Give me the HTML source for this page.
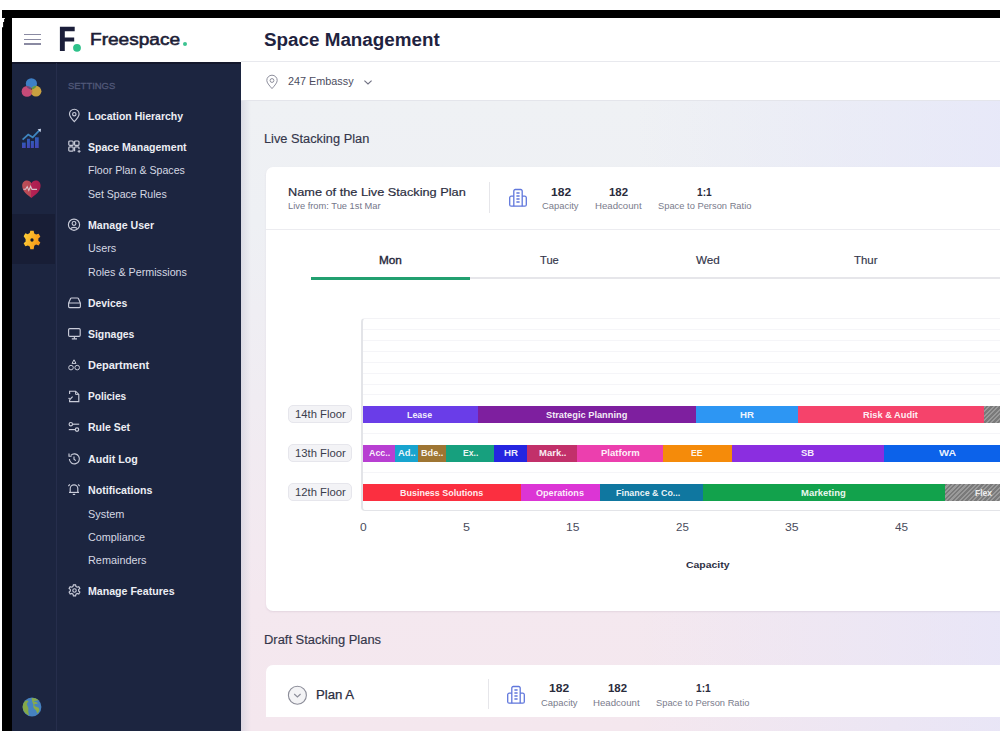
<!DOCTYPE html>
<html><head><meta charset="utf-8">
<style>
*{box-sizing:border-box;margin:0;padding:0}
html,body{width:1000px;height:731px;overflow:hidden;background:#fff;font-family:"Liberation Sans",sans-serif;position:relative}
.a{position:absolute}
.t{position:absolute;white-space:nowrap;transform-origin:0 50%;font-family:"Liberation Sans",sans-serif}
.seg{position:absolute}
</style></head><body>
<!-- black frame -->
<div class="a" style="left:2px;top:10px;width:998px;height:8px;background:#000"></div>
<div class="a" style="left:2px;top:10px;width:10px;height:721px;background:#000"></div>
<svg class="a" style="left:0;top:17.9px" width="6" height="10" viewBox="0 0 6 10"><path d="M0 0 H4.9 V1.1 H4.1 V4.1 H3.1 V9.2 H2 V0 Z" fill="#fff"/></svg>
<!-- header -->
<div class="a" style="left:12px;top:18px;width:988px;height:44px;background:#fff"></div>
<div class="a" style="left:241px;top:61px;width:759px;height:1px;background:#e8e9ee"></div>
<!-- hamburger -->
<div class="a" style="left:24px;top:34px;width:17px;height:1.4px;background:#8a8aa2"></div>
<div class="a" style="left:24px;top:38.6px;width:17px;height:1.4px;background:#8a8aa2"></div>
<div class="a" style="left:24px;top:43.2px;width:17px;height:1.4px;background:#8a8aa2"></div>
<!-- F logo -->
<svg class="a" style="left:50px;top:20px" width="40" height="40" viewBox="0 0 40 40">
<path d="M9.9 6.8 H24.7 V11.2 H14.8 V17.4 H24.2 V21.6 H14.8 V30.9 H9.9 Z" fill="#1b1e3a"/>
<circle cx="27" cy="27.8" r="3.9" fill="#2ec18a"/>
</svg>
<div class="a" style="left:182.8px;top:41.6px;width:4px;height:4px;border-radius:50%;background:#3cc391"></div>
<!-- sidebar -->
<div class="a" style="left:12px;top:62px;width:229px;height:669px;background:#1c2540"></div>
<div class="a" style="left:12px;top:62px;width:229px;height:1.5px;background:#14182c"></div>
<div class="a" style="left:55.5px;top:63px;width:1px;height:668px;background:#262e4c"></div>
<div class="a" style="left:12px;top:214px;width:43px;height:50px;background:#181e36"></div>
<!-- rail icons -->
<svg class="a" style="left:18px;top:74px" width="28" height="28" viewBox="0 0 28 28">
<defs><clipPath id="cb"><circle cx="13.4" cy="9.8" r="5.6"/></clipPath><clipPath id="cy"><circle cx="18" cy="17.2" r="5.4"/></clipPath></defs>
<circle cx="13.4" cy="9.8" r="5.6" fill="#3e7fc5"/>
<circle cx="9" cy="17.4" r="5.4" fill="#c54b78"/>
<circle cx="18" cy="17.2" r="5.4" fill="#c9a140"/>
<circle cx="18" cy="17.2" r="5.4" fill="#5a9848" clip-path="url(#cb)"/>
<g clip-path="url(#cb)"><circle cx="9" cy="17.4" r="5.4" fill="#6a4a78"/></g>
<g clip-path="url(#cy)"><circle cx="9" cy="17.4" r="5.4" fill="#c86a50"/></g>
<g clip-path="url(#cb)"><g clip-path="url(#cy)"><circle cx="9" cy="17.4" r="5.4" fill="#1a1a22"/></g></g>
</svg>
<svg class="a" style="left:18px;top:125px" width="28" height="28" viewBox="0 0 28 28">
<defs><linearGradient id="bg1" x1="0" y1="0" x2="0" y2="1"><stop offset="0" stop-color="#2f5cb8"/><stop offset="1" stop-color="#4446b8"/></linearGradient></defs>
<rect x="4" y="17.6" width="3.7" height="5.4" fill="url(#bg1)"/>
<rect x="9" y="13.8" width="2.9" height="9.2" fill="url(#bg1)"/>
<rect x="12.8" y="16" width="3.1" height="7" fill="url(#bg1)"/>
<rect x="17" y="12.3" width="3.7" height="10.7" fill="url(#bg1)"/>
<path d="M4.6 14.6 L10.2 9.6 L14.7 12.3 L19.9 6.9 L21.8 5.2" stroke="#3f86c0" stroke-width="1.8" fill="none"/>
<path d="M19.6 4.2 L23 3.8 L22.6 7.2 Z" fill="#c7d2e8"/>
</svg>
<svg class="a" style="left:18px;top:175px" width="28" height="28" viewBox="0 0 28 28">
<defs><linearGradient id="hg" x1="0" y1="0" x2="1" y2="0"><stop offset="0" stop-color="#bd5058"/><stop offset="0.5" stop-color="#b84655"/><stop offset="0.5" stop-color="#b42255"/><stop offset="1" stop-color="#a81e4c"/></linearGradient></defs>
<path d="M13.4 23 C6.5 18 4.2 15 4.2 10.6 C4.2 7.6 6.4 5.6 9 5.6 C10.9 5.6 12.4 6.6 13.4 8.2 C14.4 6.6 15.9 5.6 17.8 5.6 C20.4 5.6 22.6 7.6 22.6 10.6 C22.6 15 20.3 18 13.4 23Z" fill="url(#hg)"/>
<path d="M5.4 14.2 H7.6 L9.2 11.6 L10.8 15.4 L12.6 11.4 L14 14.4 H19" stroke="#d8c4cc" stroke-width="1.1" fill="none"/>
</svg>
<svg class="a" style="left:21.5px;top:230px" width="20" height="20" viewBox="0 0 24 24">
<defs><linearGradient id="gg" x1="0" y1="0" x2="1" y2="0.3"><stop offset="0" stop-color="#fdd23a"/><stop offset="1" stop-color="#f89a18"/></linearGradient></defs>
<path fill="url(#gg)" d="M10 1h4l.7 3.2a8 8 0 0 1 2.2 1.3l3.1-1 2 3.5-2.4 2.2a8 8 0 0 1 0 2.6l2.4 2.2-2 3.5-3.1-1a8 8 0 0 1-2.2 1.3L14 23h-4l-.7-3.2a8 8 0 0 1-2.2-1.3l-3.1 1-2-3.5 2.4-2.2a8 8 0 0 1 0-2.6L2 7.5l2-3.5 3.1 1a8 8 0 0 1 2.2-1.3z"/>
<circle cx="12" cy="12" r="2" fill="#15182a"/>
</svg>
<svg class="a" style="left:21.5px;top:697px" width="20" height="20" viewBox="0 0 20 20">
<circle cx="10" cy="10" r="9.4" fill="#4682c0"/>
<path d="M3.2 4 C4.6 3 6 3.4 6.6 4.6 C5.6 5.6 4.6 6.4 5 8 C5.6 9.6 6.8 10.6 6.4 12.6 C6 14.4 6.6 16.4 7.2 18.6 C4 17.4 1 14.6 0.7 10.6 C0.6 7.8 1.6 5.6 3.2 4Z" fill="#84a848"/>
<path d="M9.6 1 C11.6 0.6 14.6 1.2 16.4 3 C15.2 3.8 12.6 3.8 11.4 4.6 C13 5 15 5.2 16 6.4 C14.6 6.8 13 6.6 12.2 7.6 C12 9 13.6 10 15.6 10.2 C17 10.4 17.6 12 17.2 14 C16.4 15.4 15.8 16 15.2 16.6 C14.8 14.6 14 13 12.8 12.2 C11.2 11 11 9 11.4 7.4 C10.4 6 10 3 9.6 1Z" fill="#88aa4a"/>
</svg>
<!-- sidebar menu icons -->
<svg class="a" style="left:68px;top:108px" width="13" height="15" viewBox="0 0 13 15" fill="none" stroke="#c9ccd9" stroke-width="1.15">
<path d="M6.3 13.6 C3.4 10.6 1.5 8.4 1.5 6 A4.8 4.8 0 0 1 11.1 6 C11.1 8.4 9.2 10.6 6.3 13.6Z"/><circle cx="6.3" cy="6.2" r="1.7"/>
</svg>
<svg class="a" style="left:67px;top:139px" width="15" height="15" viewBox="0 0 15 15" fill="none" stroke="#c9ccd9" stroke-width="1.2">
<rect x="1.8" y="2" width="4.4" height="4.4" rx="1"/><rect x="7.6" y="2" width="4.4" height="4.4" rx="1"/><rect x="1.8" y="7.8" width="4.4" height="4.4" rx="1"/><path d="M7.6 12.2 V8.8 A1 1 0 0 1 8.6 7.8 H11 A1 1 0 0 1 12 8.8 V10"/><path d="M10.6 12.3 H13.6 M12.1 10.8 V13.8" stroke-width="1"/>
</svg>
<svg class="a" style="left:67px;top:218px" width="14" height="14" viewBox="0 0 14 14" fill="none" stroke="#c9ccd9" stroke-width="1.15">
<circle cx="7" cy="6.7" r="5.6"/><circle cx="7" cy="5.4" r="1.9"/><path d="M3.6 10.8 C4.6 8.8 9.4 8.8 10.4 10.8"/>
</svg>
<svg class="a" style="left:67px;top:296px" width="15" height="13" viewBox="0 0 15 13" fill="none" stroke="#c9ccd9" stroke-width="1.15">
<path d="M1.6 7 L3.6 2.6 A1 1 0 0 1 4.5 2 H10.5 A1 1 0 0 1 11.4 2.6 L13.4 7 V10.6 A1 1 0 0 1 12.4 11.6 H2.6 A1 1 0 0 1 1.6 10.6 Z M1.6 7H13.4"/>
</svg>
<svg class="a" style="left:67px;top:327px" width="15" height="13" viewBox="0 0 15 13" fill="none" stroke="#c9ccd9" stroke-width="1.15">
<rect x="1.6" y="1.6" width="11.6" height="7.8" rx="1.2"/><path d="M7.4 9.4V11.6M4.8 11.8H10"/>
</svg>
<svg class="a" style="left:67px;top:358px" width="14" height="13" viewBox="0 0 14 13" fill="none" stroke="#c9ccd9" stroke-width="1">
<path d="M7 1.8 L9 5.4 H5 Z"/><circle cx="4" cy="9.6" r="2.3"/><circle cx="10.2" cy="9.6" r="2.3"/>
</svg>
<svg class="a" style="left:67px;top:389px" width="14" height="14" viewBox="0 0 14 14" fill="none" stroke="#c9ccd9" stroke-width="1.15">
<path d="M2.6 5 V2.2 H8.6 L11.8 5.4 V12.6 H2.6 V11"/><path d="M8.6 2.2 V5.4 H11.8" stroke-width="1"/><path d="M1.6 9 L3 10.4 L5.6 7.6"/>
</svg>
<svg class="a" style="left:67px;top:420px" width="14" height="14" viewBox="0 0 14 14" fill="none" stroke="#c9ccd9" stroke-width="1.15">
<circle cx="3.8" cy="4.2" r="1.7"/><path d="M5.5 4.2H12.2"/><circle cx="10" cy="9.6" r="1.7"/><path d="M1.8 9.6H8.3"/>
</svg>
<svg class="a" style="left:67px;top:452px" width="14" height="14" viewBox="0 0 14 14" fill="none" stroke="#c9ccd9" stroke-width="1.15">
<path d="M2.4 7 A5 5 0 1 0 3.8 3.4"/><path d="M2 1.6 V4.2 H4.6"/><path d="M7 4.6V7.2L8.8 8.6"/>
</svg>
<svg class="a" style="left:67px;top:482px" width="14" height="14" viewBox="0 0 14 14" fill="none" stroke="#c9ccd9" stroke-width="1.15">
<path d="M3.2 10.2 V6.6 A3.8 3.8 0 0 1 10.8 6.6 V10.2"/><path d="M2 10.4H12"/><path d="M5.8 12.4H8.2"/><path d="M1.4 4.2L2.8 2.4M12.6 4.2L11.2 2.4"/>
</svg>
<svg class="a" style="left:67.5px;top:584px" width="13" height="13" viewBox="0 0 24 24" fill="none" stroke="#c9ccd9" stroke-width="2.1">
<path d="M10 1.6h4l.7 3a8 8 0 0 1 2.2 1.3l3-1 2 3.4-2.3 2.1a8 8 0 0 1 0 2.6l2.3 2.1-2 3.4-3-1a8 8 0 0 1-2.2 1.3l-.7 3h-4l-.7-3a8 8 0 0 1-2.2-1.3l-3 1-2-3.4 2.3-2.1a8 8 0 0 1 0-2.6L2 8.3l2-3.4 3 1a8 8 0 0 1 2.2-1.3z"/><circle cx="12" cy="12" r="3.2"/>
</svg>
<!-- main -->
<div class="a" style="left:241px;top:62px;width:759px;height:39px;background:#fff;border-bottom:1px solid #e4e5eb"></div>
<div class="a" style="left:241px;top:101px;width:759px;height:630px;background:linear-gradient(180deg,#eff1f4 0px,#eef0f4 120px,#f0ecf2 300px,#f4e8ef 500px,#f4e7ee 630px)"></div>
<div class="a" style="left:241px;top:101px;width:759px;height:630px;background:linear-gradient(90deg,rgba(228,229,250,0) 0%,rgba(228,229,250,0) 52%,rgba(228,229,250,0.7) 100%)"></div>
<div class="a" style="left:241px;top:101px;width:10px;height:630px;background:linear-gradient(90deg,rgba(205,205,218,0.6),rgba(205,205,218,0))"></div>
<svg class="a" style="left:265px;top:74px" width="14" height="16" viewBox="0 0 14 16" fill="none" stroke="#8d8e9c" stroke-width="1">
<path d="M7 14.6 C4 11.2 1.8 8.6 1.8 6.4 A5.2 5.2 0 0 1 12.2 6.4 C12.2 8.6 10 11.2 7 14.6Z"/><circle cx="7" cy="6.5" r="1.9"/>
</svg>
<svg class="a" style="left:363px;top:79px" width="10" height="7" viewBox="0 0 10 7" fill="none" stroke="#6f7082" stroke-width="1.1">
<path d="M1.4 1.6 L5 5 L8.6 1.6"/>
</svg>
<!-- card 1 -->
<div class="a" style="left:266px;top:167px;width:760px;height:444px;background:#fff;border-radius:7px;box-shadow:0 1px 2px rgba(140,120,150,0.16)"></div>
<div class="a" style="left:266px;top:229px;width:734px;height:1px;background:#ececf0"></div>
<div class="a" style="left:489px;top:182px;width:1px;height:31px;background:#e6e6ea"></div>
<svg class="a" style="left:508px;top:188px" width="20" height="20" viewBox="0 0 20 20" fill="none" stroke="#6077dc" stroke-width="1.3">
<path d="M5.8 18.2 V3 A1.5 1.5 0 0 1 7.3 1.5 H12.7 A1.5 1.5 0 0 1 14.2 3 V18.2"/><path d="M5.8 8.2 H3.2 A1.5 1.5 0 0 0 1.7 9.7 V16.7 A1.5 1.5 0 0 0 3.2 18.2 H16.8 A1.5 1.5 0 0 0 18.3 16.7 V9.7 A1.5 1.5 0 0 0 16.8 8.2 H14.2"/><path d="M8.4 5H11.6M8.4 8H11.6M8.4 11H11.6M8.4 14H11.6"/>
</svg>
<!-- tabs -->
<div class="a" style="left:311px;top:277px;width:689px;height:2.4px;background:#e6e6ea"></div>
<div class="a" style="left:311px;top:277px;width:159px;height:2.6px;background:#22a070"></div>
<!-- chart -->
<div class="a" style="left:361.2px;top:318px;width:660px;height:193px;border-left:2.2px solid #e3e4e8;border-bottom:1.8px solid #e3e4e8;border-top:1px solid #f3f3f6;border-radius:4px 0 0 4px"></div>
<div class="a" style="left:363px;top:329.0px;width:637px;height:1px;background:#f5f5f8"></div><div class="a" style="left:363px;top:339.9px;width:637px;height:1px;background:#f5f5f8"></div><div class="a" style="left:363px;top:350.8px;width:637px;height:1px;background:#f5f5f8"></div><div class="a" style="left:363px;top:361.7px;width:637px;height:1px;background:#f5f5f8"></div><div class="a" style="left:363px;top:372.6px;width:637px;height:1px;background:#f5f5f8"></div><div class="a" style="left:363px;top:383.5px;width:637px;height:1px;background:#f5f5f8"></div><div class="a" style="left:363px;top:394.4px;width:637px;height:1px;background:#f5f5f8"></div>
<div class="a" style="left:363px;top:433px;width:637px;height:1px;background:#f5f5f8"></div>
<div class="a" style="left:363px;top:472px;width:637px;height:1px;background:#f5f5f8"></div>
<div class="a" style="left:288px;top:405px;width:63.5px;height:17.5px;background:#f3f3f6;border:1px solid #e6e6ec;border-radius:5px"></div>
<div class="a" style="left:288px;top:444px;width:63.5px;height:17.5px;background:#f3f3f6;border:1px solid #e6e6ec;border-radius:5px"></div>
<div class="a" style="left:288px;top:483px;width:63.5px;height:17.5px;background:#f3f3f6;border:1px solid #e6e6ec;border-radius:5px"></div>
<div class='seg' style='left:363px;top:405.5px;width:115.80px;height:17px;background:#6a3de8'></div>
<div class='seg' style='left:478px;top:405.5px;width:218.40px;height:17px;background:#7e1f9f'></div>
<div class='seg' style='left:695.6px;top:405.5px;width:103.10px;height:17px;background:#2d96f3'></div>
<div class='seg' style='left:797.9px;top:405.5px;width:186.70px;height:17px;background:#f5436b'></div>
<div class='seg' style='left:983.8px;top:405.5px;width:17.00px;height:17px;background:repeating-linear-gradient(-45deg,#9a9a9a 0 1.6px,#7a7a7a 1.6px 3.2px)'></div>
<div class='seg' style='left:363px;top:444.5px;width:32.80px;height:17px;background:#b83fd2'></div>
<div class='seg' style='left:395px;top:444.5px;width:23.80px;height:17px;background:#18a4cf'></div>
<div class='seg' style='left:418px;top:444.5px;width:28.40px;height:17px;background:#9e7533'></div>
<div class='seg' style='left:445.6px;top:444.5px;width:49.20px;height:17px;background:#17a07e'></div>
<div class='seg' style='left:494px;top:444.5px;width:33.50px;height:17px;background:#2525e0'></div>
<div class='seg' style='left:526.7px;top:444.5px;width:51.00px;height:17px;background:#c2306a'></div>
<div class='seg' style='left:576.9px;top:444.5px;width:86.70px;height:17px;background:#ec3fae'></div>
<div class='seg' style='left:662.8px;top:444.5px;width:69.50px;height:17px;background:#f58b0a'></div>
<div class='seg' style='left:731.5px;top:444.5px;width:153.70px;height:17px;background:#8b2ee0'></div>
<div class='seg' style='left:884.4px;top:444.5px;width:116.40px;height:17px;background:#0c62ea'></div>
<div class='seg' style='left:363px;top:483.7px;width:158.80px;height:17px;background:#fb2f40'></div>
<div class='seg' style='left:521px;top:483.7px;width:79.60px;height:17px;background:#dc35d5'></div>
<div class='seg' style='left:599.8px;top:483.7px;width:104.00px;height:17px;background:#0f77a0'></div>
<div class='seg' style='left:703px;top:483.7px;width:243.10px;height:17px;background:#12a24c'></div>
<div class='seg' style='left:945.3px;top:483.7px;width:55.50px;height:17px;background:repeating-linear-gradient(-45deg,#9a9a9a 0 1.6px,#7a7a7a 1.6px 3.2px)'></div>
<!-- card 2 -->
<div class="a" style="left:266px;top:665px;width:760px;height:52px;background:#fff;border-radius:7px 7px 0 0"></div>
<div class="a" style="left:488px;top:679px;width:1px;height:30px;background:#e6e6ea"></div>
<svg class="a" style="left:287px;top:685px" width="21" height="21" viewBox="0 0 21 21" fill="#f3f3f5" stroke="#8b8c98" stroke-width="1.1">
<circle cx="10.4" cy="10.3" r="9"/><path d="M7.2 9 L10.4 12 L13.6 9" fill="none"/>
</svg>
<svg class="a" style="left:506px;top:685px" width="20" height="20" viewBox="0 0 20 20" fill="none" stroke="#6077dc" stroke-width="1.3">
<path d="M5.8 18.2 V3 A1.5 1.5 0 0 1 7.3 1.5 H12.7 A1.5 1.5 0 0 1 14.2 3 V18.2"/><path d="M5.8 8.2 H3.2 A1.5 1.5 0 0 0 1.7 9.7 V16.7 A1.5 1.5 0 0 0 3.2 18.2 H16.8 A1.5 1.5 0 0 0 18.3 16.7 V9.7 A1.5 1.5 0 0 0 16.8 8.2 H14.2"/><path d="M8.4 5H11.6M8.4 8H11.6M8.4 11H11.6M8.4 14H11.6"/>
</svg>
<span class='t' style='left:90.31px;top:32.00px;font-size:16px;line-height:16px;font-weight:400;color:#1c2036;transform:scaleX(1.1919);-webkit-text-stroke:0.55px #1c2036'>Freespace</span>
<span class='t' style='left:264.08px;top:31.00px;font-size:18px;line-height:18px;font-weight:700;color:#1f2340;transform:scaleX(1.0460)'>Space Management</span>
<span class='t' style='left:287.68px;top:76.00px;font-size:10.5px;line-height:10.5px;font-weight:400;color:#4b4c5e;transform:scaleX(1.0308)'>247 Embassy</span>
<span class='t' style='left:67.51px;top:81.00px;font-size:9.6px;line-height:9.6px;font-weight:400;color:#4f5777;transform:scaleX(0.9851);-webkit-text-stroke:0.3px #535a7a'>SETTINGS</span>
<span class='t' style='left:87.98px;top:111.00px;font-size:11px;line-height:11px;font-weight:700;color:#eceef4;transform:scaleX(0.9539)'>Location Hierarchy</span>
<span class='t' style='left:88.46px;top:142.00px;font-size:11px;line-height:11px;font-weight:700;color:#eceef4;transform:scaleX(0.9600)'>Space Management</span>
<span class='t' style='left:87.98px;top:220.00px;font-size:11px;line-height:11px;font-weight:700;color:#eceef4;transform:scaleX(0.9653)'>Manage User</span>
<span class='t' style='left:87.99px;top:298.00px;font-size:11px;line-height:11px;font-weight:700;color:#eceef4;transform:scaleX(0.9432)'>Devices</span>
<span class='t' style='left:88.46px;top:329.00px;font-size:11px;line-height:11px;font-weight:700;color:#eceef4;transform:scaleX(0.9492)'>Signages</span>
<span class='t' style='left:87.95px;top:360.00px;font-size:11px;line-height:11px;font-weight:700;color:#eceef4'>Department</span>
<span class='t' style='left:88.01px;top:391.00px;font-size:11px;line-height:11px;font-weight:700;color:#eceef4;transform:scaleX(0.9160)'>Policies</span>
<span class='t' style='left:87.98px;top:422.00px;font-size:11px;line-height:11px;font-weight:700;color:#eceef4;transform:scaleX(0.9549)'>Rule Set</span>
<span class='t' style='left:88.46px;top:454.00px;font-size:11px;line-height:11px;font-weight:700;color:#eceef4;transform:scaleX(0.9703)'>Audit Log</span>
<span class='t' style='left:87.98px;top:485.00px;font-size:11px;line-height:11px;font-weight:700;color:#eceef4;transform:scaleX(0.9664)'>Notifications</span>
<span class='t' style='left:87.98px;top:586.00px;font-size:11px;line-height:11px;font-weight:700;color:#eceef4;transform:scaleX(0.9634)'>Manage Features</span>
<span class='t' style='left:87.98px;top:165.00px;font-size:11px;line-height:11px;font-weight:400;color:#d5d8e3;transform:scaleX(0.9662)'>Floor Plan &amp; Spaces</span>
<span class='t' style='left:88.22px;top:189.00px;font-size:11px;line-height:11px;font-weight:400;color:#d5d8e3;transform:scaleX(0.9600)'>Set Space Rules</span>
<span class='t' style='left:87.96px;top:243.00px;font-size:11px;line-height:11px;font-weight:400;color:#d5d8e3;transform:scaleX(0.9838)'>Users</span>
<span class='t' style='left:87.97px;top:267.00px;font-size:11px;line-height:11px;font-weight:400;color:#d5d8e3;transform:scaleX(0.9751)'>Roles &amp; Permissions</span>
<span class='t' style='left:88.20px;top:509.00px;font-size:11px;line-height:11px;font-weight:400;color:#d5d8e3;transform:scaleX(0.9915)'>System</span>
<span class='t' style='left:88.21px;top:532.00px;font-size:11px;line-height:11px;font-weight:400;color:#d5d8e3;transform:scaleX(0.9834)'>Compliance</span>
<span class='t' style='left:87.96px;top:555.00px;font-size:11px;line-height:11px;font-weight:400;color:#d5d8e3;transform:scaleX(0.9871)'>Remainders</span>
<span class='t' style='left:263.93px;top:133.00px;font-size:12px;line-height:12px;font-weight:400;color:#34364a;transform:scaleX(1.0660);-webkit-text-stroke:0.15px #34364a'>Live Stacking Plan</span>
<span class='t' style='left:287.92px;top:187.00px;font-size:11.8px;line-height:11.8px;font-weight:400;color:#2b2d40;transform:scaleX(1.0798);-webkit-text-stroke:0.2px #2b2d40'>Name of the Live Stacking Plan</span>
<span class='t' style='left:288.04px;top:202.00px;font-size:9.2px;line-height:9.2px;font-weight:400;color:#74768a;transform:scaleX(1.0133)'>Live from: Tue 1st Mar</span>
<span class='t' style='left:551.02px;top:188.00px;font-size:10.3px;line-height:10.3px;font-weight:700;color:#2a2c3c;transform:scaleX(1.1692)'>182</span>
<span class='t' style='left:542.48px;top:202.00px;font-size:9px;line-height:9px;font-weight:400;color:#7a7c8c;transform:scaleX(1.0435)'>Capacity</span>
<span class='t' style='left:609.25px;top:188.00px;font-size:10.3px;line-height:10.3px;font-weight:700;color:#2a2c3c;transform:scaleX(1.1077)'>182</span>
<span class='t' style='left:595.00px;top:202.00px;font-size:9px;line-height:9px;font-weight:400;color:#7a7c8c;transform:scaleX(1.0713)'>Headcount</span>
<span class='t' style='left:697.31px;top:188.00px;font-size:10.3px;line-height:10.3px;font-weight:700;color:#2a2c3c;transform:scaleX(0.9825)'>1:1</span>
<span class='t' style='left:657.68px;top:202.00px;font-size:9px;line-height:9px;font-weight:400;color:#7a7c8c;transform:scaleX(1.0375)'>Space to Person Ratio</span>
<span class='t' style='left:549.42px;top:684.00px;font-size:10.3px;line-height:10.3px;font-weight:700;color:#2a2c3c;transform:scaleX(1.1692)'>182</span>
<span class='t' style='left:540.88px;top:699.00px;font-size:9px;line-height:9px;font-weight:400;color:#7a7c8c;transform:scaleX(1.0435)'>Capacity</span>
<span class='t' style='left:607.65px;top:684.00px;font-size:10.3px;line-height:10.3px;font-weight:700;color:#2a2c3c;transform:scaleX(1.1077)'>182</span>
<span class='t' style='left:593.40px;top:699.00px;font-size:9px;line-height:9px;font-weight:400;color:#7a7c8c;transform:scaleX(1.0713)'>Headcount</span>
<span class='t' style='left:695.71px;top:684.00px;font-size:10.3px;line-height:10.3px;font-weight:700;color:#2a2c3c;transform:scaleX(0.9825)'>1:1</span>
<span class='t' style='left:656.08px;top:699.00px;font-size:9px;line-height:9px;font-weight:400;color:#7a7c8c;transform:scaleX(1.0375)'>Space to Person Ratio</span>
<span class='t' style='left:378.91px;top:255.00px;font-size:10.5px;line-height:10.5px;font-weight:400;color:#25263a;transform:scaleX(1.1184);-webkit-text-stroke:0.35px #25263a'>Mon</span>
<span class='t' style='left:539.64px;top:255.00px;font-size:10.5px;line-height:10.5px;font-weight:400;color:#33354a;transform:scaleX(1.0588);-webkit-text-stroke:0.15px #33354a'>Tue</span>
<span class='t' style='left:695.80px;top:255.00px;font-size:10.5px;line-height:10.5px;font-weight:400;color:#33354a;transform:scaleX(1.1133);-webkit-text-stroke:0.15px #33354a'>Wed</span>
<span class='t' style='left:854.13px;top:255.00px;font-size:10.5px;line-height:10.5px;font-weight:400;color:#33354a;transform:scaleX(1.0871);-webkit-text-stroke:0.15px #33354a'>Thur</span>
<span class='t' style='left:294.63px;top:409.00px;font-size:11px;line-height:11px;font-weight:400;color:#3b3d4d;transform:scaleX(1.0236)'>14th Floor</span>
<span class='t' style='left:294.63px;top:448.00px;font-size:11px;line-height:11px;font-weight:400;color:#3b3d4d;transform:scaleX(1.0236)'>13th Floor</span>
<span class='t' style='left:294.63px;top:487.00px;font-size:11px;line-height:11px;font-weight:400;color:#3b3d4d;transform:scaleX(1.0236)'>12th Floor</span>
<span class='t' style='left:359.62px;top:522.00px;font-size:10.8px;line-height:10.8px;font-weight:400;color:#4a4c5c;transform:scaleX(1.1091)'>0</span>
<span class='t' style='left:463.02px;top:522.00px;font-size:10.8px;line-height:10.8px;font-weight:400;color:#4a4c5c;transform:scaleX(1.1619)'>5</span>
<span class='t' style='left:566.16px;top:522.00px;font-size:10.8px;line-height:10.8px;font-weight:400;color:#4a4c5c;transform:scaleX(1.1182)'>15</span>
<span class='t' style='left:676.07px;top:522.00px;font-size:10.8px;line-height:10.8px;font-weight:400;color:#4a4c5c;transform:scaleX(1.0667)'>25</span>
<span class='t' style='left:785.13px;top:522.00px;font-size:10.8px;line-height:10.8px;font-weight:400;color:#4a4c5c;transform:scaleX(1.1378)'>35</span>
<span class='t' style='left:894.83px;top:522.00px;font-size:10.8px;line-height:10.8px;font-weight:400;color:#4a4c5c;transform:scaleX(1.0870)'>45</span>
<span class='t' style='left:685.73px;top:560.00px;font-size:9.8px;line-height:9.8px;font-weight:700;color:#2e3044;transform:scaleX(1.0667)'>Capacity</span>
<span class='t' style='left:264.02px;top:634.00px;font-size:12px;line-height:12px;font-weight:400;color:#34364a;transform:scaleX(1.0769);-webkit-text-stroke:0.15px #34364a'>Draft Stacking Plans</span>
<span class='t' style='left:315.74px;top:689.00px;font-size:12.5px;line-height:12.5px;font-weight:400;color:#2b2d40;transform:scaleX(1.0553);-webkit-text-stroke:0.25px #2b2d40'>Plan A</span>
<span class='t' style='left:407.30px;top:410.00px;font-size:9.8px;line-height:9.8px;font-weight:700;color:rgba(255,255,255,0.93);transform:scaleX(0.9074)'>Lease</span>
<span class='t' style='left:545.76px;top:410.00px;font-size:9.8px;line-height:9.8px;font-weight:700;color:rgba(255,255,255,0.93);transform:scaleX(0.9455)'>Strategic Planning</span>
<span class='t' style='left:739.71px;top:410.00px;font-size:9.8px;line-height:9.8px;font-weight:700;color:rgba(255,255,255,0.93);transform:scaleX(0.9852)'>HR</span>
<span class='t' style='left:863.13px;top:410.00px;font-size:9.8px;line-height:9.8px;font-weight:700;color:rgba(255,255,255,0.93);transform:scaleX(0.9467)'>Risk &amp; Audit</span>
<span class='t' style='left:368.77px;top:448.00px;font-size:9.8px;line-height:9.8px;font-weight:700;color:rgba(255,255,255,0.93);transform:scaleX(0.9067)'>Acc..</span>
<span class='t' style='left:397.76px;top:448.00px;font-size:9.8px;line-height:9.8px;font-weight:700;color:rgba(255,255,255,0.93);transform:scaleX(0.9577)'>Ad..</span>
<span class='t' style='left:420.53px;top:448.00px;font-size:9.8px;line-height:9.8px;font-weight:700;color:rgba(255,255,255,0.93);transform:scaleX(0.9304)'>Bde..</span>
<span class='t' style='left:462.56px;top:448.00px;font-size:9.8px;line-height:9.8px;font-weight:700;color:rgba(255,255,255,0.93);transform:scaleX(0.8862)'>Ex..</span>
<span class='t' style='left:503.50px;top:448.00px;font-size:9.8px;line-height:9.8px;font-weight:700;color:rgba(255,255,255,0.93);transform:scaleX(0.9926)'>HR</span>
<span class='t' style='left:538.72px;top:448.00px;font-size:9.8px;line-height:9.8px;font-weight:700;color:rgba(255,255,255,0.93);transform:scaleX(0.9688)'>Mark..</span>
<span class='t' style='left:601.11px;top:448.00px;font-size:9.8px;line-height:9.8px;font-weight:700;color:rgba(255,255,255,0.93);transform:scaleX(0.9729)'>Platform</span>
<span class='t' style='left:691.16px;top:448.00px;font-size:9.8px;line-height:9.8px;font-weight:700;color:rgba(255,255,255,0.93);transform:scaleX(0.8816)'>EE</span>
<span class='t' style='left:800.96px;top:448.00px;font-size:9.8px;line-height:9.8px;font-weight:700;color:rgba(255,255,255,0.93);transform:scaleX(0.9692)'>SB</span>
<span class='t' style='left:939.00px;top:448.00px;font-size:9.8px;line-height:9.8px;font-weight:700;color:rgba(255,255,255,0.93);transform:scaleX(1.0839)'>WA</span>
<span class='t' style='left:399.94px;top:488.00px;font-size:9.8px;line-height:9.8px;font-weight:700;color:rgba(255,255,255,0.93);transform:scaleX(0.9144)'>Business Solutions</span>
<span class='t' style='left:536.47px;top:488.00px;font-size:9.8px;line-height:9.8px;font-weight:700;color:rgba(255,255,255,0.93);transform:scaleX(0.9268)'>Operations</span>
<span class='t' style='left:616.45px;top:488.00px;font-size:9.8px;line-height:9.8px;font-weight:700;color:rgba(255,255,255,0.93);transform:scaleX(0.9075)'>Finance &amp; Co...</span>
<span class='t' style='left:801.32px;top:488.00px;font-size:9.8px;line-height:9.8px;font-weight:700;color:rgba(255,255,255,0.93);transform:scaleX(0.9657)'>Marketing</span>
<span class='t' style='left:975.26px;top:488.00px;font-size:9.8px;line-height:9.8px;font-weight:700;color:#eeeeee;transform:scaleX(0.8737)'>Flex</span>
</body></html>
